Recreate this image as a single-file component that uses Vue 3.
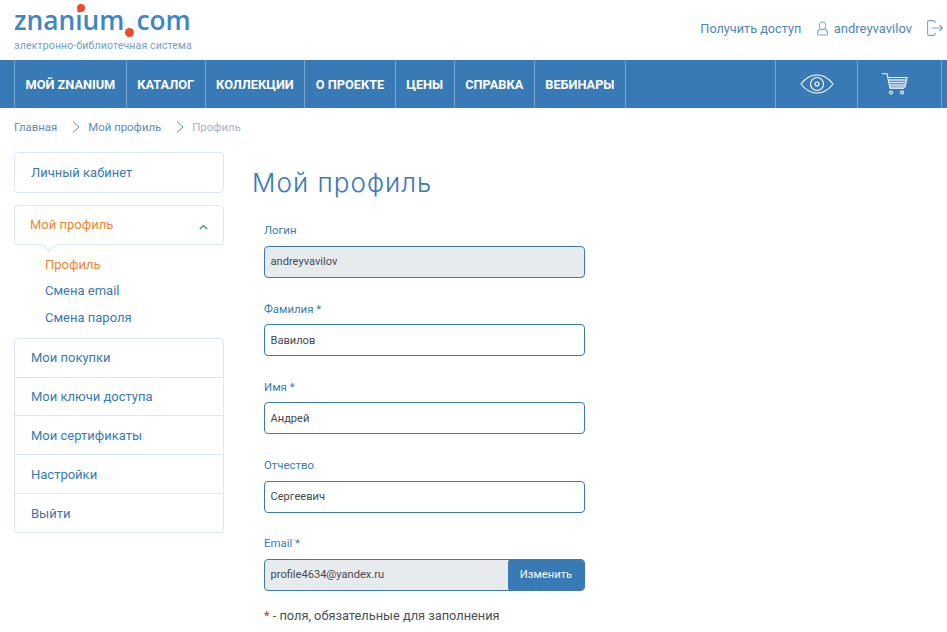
<script setup>
const navItems = ['МОЙ ZNANIUM', 'КАТАЛОГ', 'КОЛЛЕКЦИИ', 'О ПРОЕКТЕ', 'ЦЕНЫ', 'СПРАВКА', 'ВЕБИНАРЫ']
const lowerMenu = ['Мои покупки', 'Мои ключи доступа', 'Мои сертификаты', 'Настройки', 'Выйти']
const fields = [
  { label: 'Логин', value: 'andreyvavilov', disabled: true },
  { label: 'Фамилия *', value: 'Вавилов' },
  { label: 'Имя *', value: 'Андрей' },
  { label: 'Отчество', value: 'Сергеевич' },
]
</script>

<template>
  <div class="page">
    <header class="top">
      <div class="logo">
        <div class="logo-name">znanium<span class="logo-gap"></span>com<i class="dot dot-a"></i><i class="dot dot-b"></i></div>
        <div class="logo-sub">электронно-библиотечная система</div>
      </div>
      <div class="top-links">
        <a class="access">Получить доступ</a>
        <span class="user">
          <svg width="13" height="15" viewBox="0 0 14 16" fill="none" stroke="#7aa5cf" stroke-width="1.1">
            <ellipse cx="7" cy="5" rx="3.4" ry="4" />
            <path d="M4.5 8.5C2.5 9.5 1.5 11 1.5 13.5c0 1 .5 1.5 1.5 1.5h8c1 0 1.500-.5 1.500-1.500 0-2.500-1-4-3-5" />
          </svg>
          andreyvavilov
        </span>
        <svg class="exit" width="16" height="16" viewBox="0 0 16 16" fill="none" stroke="#7aa5cf" stroke-width="1.1">
          <path d="M8 3V2C8 1 7.500.6 6.500.6H2C1 .6.600 1 .6 2v12c0 1 .4 1.400 1.400 1.400h4.500c1 0 1.500-.4 1.500-1.400v-1" />
          <path d="M4.500 8h11M12.500 5l3 3-3 3" />
        </svg>
      </div>
    </header>

    <nav class="nav">
      <a v-for="item in navItems" :key="item" class="nav-item">{{ item }}</a>
      <span class="nav-space"></span>
      <a class="nav-icon eye">
        <svg width="34" height="22" viewBox="0 0 34 22" fill="none" stroke="#fff" stroke-width="1.100">
          <path d="M1 11C5.500 5 11 2 17 2s11.500 3 16 9c-4.500 6-10 9-16 9S5.500 17 1 11z" />
          <circle cx="17" cy="11" r="6.500" />
          <circle cx="17" cy="11" r="2" />
        </svg>
      </a>
      <a class="nav-icon cart">
        <svg width="26" height="22" viewBox="0 0 26 22" fill="none" stroke="#fff" stroke-width="1.100">
          <path d="M0 .7h5l3 14.500h14" />
          <path d="M5.700 4.500H25L23 14H7.800" />
          <path d="M7 7h17M7.500 9.500h16M8 12h15" stroke-width="1.500" stroke="#dbe8f3" />
          <circle cx="9" cy="19.500" r="1.500" />
          <circle cx="20" cy="19.500" r="1.500" />
        </svg>
      </a>
    </nav>

    <div class="crumbs">
      <a>Главная</a>
      <svg class="sep" width="8" height="12" viewBox="0 0 8 12" fill="none" stroke="#5c8fc0" stroke-width="1"><path d="M1 .5 7 6 1 11.500" /></svg>
      <a>Мой профиль</a>
      <svg class="sep" width="8" height="12" viewBox="0 0 8 12" fill="none" stroke="#5c8fc0" stroke-width="1"><path d="M1 .5 7 6 1 11.500" /></svg>
      <span class="crumb-now">Профиль</span>
    </div>

    <div class="body">
      <aside class="side">
        <div class="box single">Личный кабинет</div>
        <div class="box single active">
          Мой профиль
          <svg class="chev" width="9" height="6" viewBox="0 0 9 6" fill="none" stroke="#377ab5" stroke-width="1.200"><path d="M.8 5 4.500 1.500 8.200 5" /></svg>
          <i class="notch"></i>
        </div>
        <div class="sub">
          <a class="sub-on">Профиль</a>
          <a>Смена email</a>
          <a>Смена пароля</a>
        </div>
        <div class="box group">
          <a v-for="item in lowerMenu" :key="item" class="group-row">{{ item }}</a>
        </div>
      </aside>

      <main class="main">
        <h1>Мой профиль</h1>
        <form class="form">
          <div v-for="f in fields" :key="f.label" class="field">
            <label>{{ f.label }}</label>
            <div class="input" :class="{ off: f.disabled }">{{ f.value }}</div>
          </div>
          <div class="field">
            <label>Email *</label>
            <div class="input off with-btn">
              <span class="email">profile4634@yandex.ru</span>
              <span class="btn">Изменить</span>
            </div>
          </div>
          <p class="note"><span>*</span> - поля, обязательные для заполнения</p>
        </form>
      </main>
    </div>
  </div>
</template>

<style>
html, body { margin: 0; background: #fff; overflow: hidden; }
</style>

<style scoped>
.page {
  width: 947px;
  height: 632px;
  overflow: hidden;
  font-family: Roboto, "Liberation Sans", sans-serif;
  color: #377ab5;
  box-sizing: border-box;
}
.top {
  height: 60px;
  display: flex;
  justify-content: space-between;
  padding: 0 4px 0 14px;
}
.logo { padding-top: 4px; }
.logo-name {
  position: relative;
  font-family: "Open Sans", "Liberation Sans", sans-serif;
  font-size: 26.300px;
  font-weight: 600;
  line-height: 32px;
  color: #3f86c6;
  width: 178px;
  white-space: nowrap;
}
.logo-gap { display: inline-block; width: 12px; }
.dot { position: absolute; border-radius: 50%; background: #ee4b2b; }
.dot-a { width: 8px; height: 8px; left: 63px; top: 0; }
.dot-b { width: 9px; height: 9px; left: 110.500px; top: 23.500px; }
.logo-sub {
  margin-top: 2.500px;
  font-size: 10.500px;
  line-height: 13px;
  color: #6f9fcb;
  letter-spacing: .15px;
  white-space: nowrap;
}
.top-links {
  display: flex;
  align-items: center;
  height: 56px;
  font-size: 13px;
  color: #4a87bf;
}
.access { margin-right: 14.500px; font-size: 12.700px; }
.user { display: flex; align-items: center; gap: 5px; }
.exit { margin-left: 15px; }

.nav {
  height: 48px;
  background: #377ab5;
  display: flex;
  padding-left: 14px;
  padding-right: 5px;
}
.nav-item {
  display: flex;
  align-items: center;
  padding: 0 10.500px;
  border-left: 1px solid #7ba7cf;
  color: #fff;
  font-size: 12.750px;
  font-weight: 700;
  white-space: nowrap;
}
.nav-item:nth-child(7) { border-right: 1px solid #7ba7cf; }
.nav-space { flex: 1; }
.nav-icon {
  display: flex;
  align-items: center;
  justify-content: center;
  border-left: 1px solid #7ba7cf;
}
.eye { width: 81px; }
.cart {
  width: 83px;
  box-sizing: content-box;
  border-right: 1px solid #7ba7cf;
}
.cart svg { margin-right: 9px; }

.crumbs {
  display: flex;
  align-items: center;
  height: 38px;
  padding-bottom: 2px;
  padding-left: 14px;
  font-size: 11.400px;
  color: #5b8cba;
}
.sep { margin: 0 8px 0 15px; }
.crumb-now { color: #a9b2bb; }

.body { display: flex; padding: 4px 0 0 14px; }
.side { width: 210px; flex: none; font-size: 13px; }
.box {
  border: 1px solid #d9e8f5;
  border-radius: 4px;
  box-sizing: border-box;
}
.single {
  position: relative;
  height: 41px;
  padding-left: 16px;
  display: flex;
  align-items: center;
  margin-bottom: 12px;
}
.active { height: 40px; margin-bottom: 0; padding-left: 15px; padding-bottom: 2px; color: #f5842c; }
.chev { position: absolute; right: 15px; top: 18px; }
.notch {
  position: absolute;
  left: 29px;
  bottom: -6px;
  width: 9px;
  height: 9px;
  background: #fff;
  border-right: 1px solid #d9e8f5;
  border-bottom: 1px solid #d9e8f5;
  transform: rotate(45deg);
}
.sub {
  display: flex;
  flex-direction: column;
  padding: 6px 0 7px 31px;
}
.sub a { height: 26.500px; display: flex; align-items: center; }
.sub .sub-on { color: #f5842c; }
.group { display: flex; flex-direction: column; }
.group-row {
  height: 39px;
  padding-left: 16px;
  padding-top: 2px;
  display: flex;
  align-items: center;
  border-top: 1px solid #d9e8f5;
  box-sizing: border-box;
}
.group-row:first-child { height: 38px; padding-top: 0; border-top: 0; }
.group-row:nth-child(2) { height: 38px; padding-top: 0; }

.main { padding-left: 28px; }
h1 {
  margin: 0;
  padding-top: 14px;
  font-family: Inter, Roboto, sans-serif;
  font-size: 26px;
  line-height: 34px;
  font-weight: 300;
  color: #377ab5;
  letter-spacing: 1.050px;
  white-space: nowrap;
}
.form { width: 321px; margin: 22.900px 0 0 12px; }
.field { height: 78.250px; }
label {
  display: block;
  box-sizing: border-box;
  height: 23px;
  padding-top: .5px;
  font-size: 11.400px;
  line-height: 14px;
  color: #377ab5;
}
.input {
  box-sizing: border-box;
  height: 32px;
  border: 1px solid #377ab5;
  border-radius: 4px;
  padding-left: 5.500px;
  display: flex;
  align-items: center;
  font-size: 11.100px;
  color: #444a50;
  background: #fff;
}
.off { background: #e8ebee; }
.with-btn { padding-right: 0; justify-content: space-between; overflow: hidden; }
.btn {
  width: 76px;
  height: 32px;
  display: flex;
  align-items: center;
  justify-content: center;
  background: #377ab5;
  color: #fff;
  font-size: 11.200px;
  border-radius: 4px 0 0 4px;
  flex: none;
}
.note {
  margin: -6.650px 0 0;
  font-size: 12.800px;
  line-height: 16px;
  color: #4a4f54;
}
.note span { color: #c0392b; }
</style>
